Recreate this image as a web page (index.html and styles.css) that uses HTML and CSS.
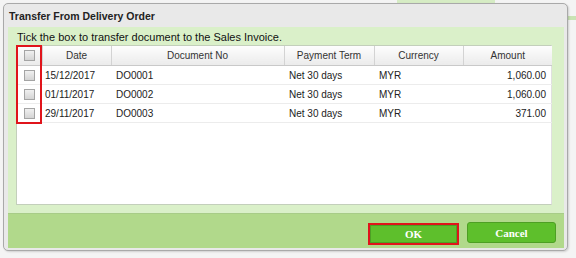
FILE: index.html
```html
<!DOCTYPE html>
<html lang="en">
<head>
  <meta charset="UTF-8">
  <title>Transfer From Delivery Order</title>
  <link rel="stylesheet" href="styles.css">
</head>
<body>

  <div class="desk">
    <div class="desk-tab"></div>
    <div class="desk-stripe"></div>

    <div class="dialog">
      <div class="dialog-title">Transfer From Delivery Order</div>

      <div class="dialog-body">
        <div class="panel">
          <p class="hint">Tick the box to transfer document to the Sales Invoice.</p>

          <div class="grid">
            <table>
              <colgroup>
                <col class="c-check">
                <col class="c-date">
                <col class="c-doc">
                <col class="c-term">
                <col class="c-cur">
                <col class="c-amt">
              </colgroup>
              <thead>
                <tr>
                  <th><span class="check"></span></th>
                  <th>Date</th>
                  <th>Document No</th>
                  <th>Payment Term</th>
                  <th>Currency</th>
                  <th>Amount</th>
                </tr>
              </thead>
              <tbody id="rows"></tbody>
            </table>
            <div class="mark-col"></div>
          </div>
        </div>

        <div class="footer">
          <span class="mark-btn"><button class="btn">OK</button></span>
          <button class="btn">Cancel</button>
        </div>
      </div>
    </div>
  </div>

  <script>
    const orders = [
      ["15/12/2017", "DO0001", "Net 30 days", "MYR", "1,060.00"],
      ["01/11/2017", "DO0002", "Net 30 days", "MYR", "1,060.00"],
      ["29/11/2017", "DO0003", "Net 30 days", "MYR", "371.00"]
    ];

    const rows = document.getElementById("rows");
    orders.forEach(o => {
      const tr = document.createElement("tr");
      tr.innerHTML = `<td><span class="check"></span></td>
        <td class="date">${o[0]}</td><td>${o[1]}</td><td>${o[2]}</td><td>${o[3]}</td>
        <td class="num">${o[4]}</td>`;
      rows.appendChild(tr);
    });
  </script>
</body>
</html>
```

FILE: styles.css
```css
body {
  margin: 0;
  font-family: 'Liberation Sans', Arial, sans-serif;
  font-size: 10px;
  color: #222;
  background: #f4f4f4;
}

.desk {
  position: relative;
  width: 576px;
  height: 258px;
  padding: 3px 0 0 3px;
  box-sizing: border-box;
  overflow: hidden;
}

.desk-tab {
  position: absolute;
  top: 0;
  left: 397px;
  width: 98px;
  height: 3px;
  background: #d6ecc4;
}

.desk-stripe {
  position: absolute;
  top: 16px;
  right: 0;
  width: 10px;
  height: 4px;
  background: #c9e3b4;
}

.dialog {
  position: relative;
  width: 565px;
  height: 248px;
  box-sizing: border-box;
  border: 1px solid #a9a9a9;
  border-radius: 5px;
  background: #e9e9e9;
  display: flex;
  flex-direction: column;
  box-shadow: 1px 1px 2px rgba(0, 0, 0, 0.15);
}

.dialog-title {
  height: 23px;
  line-height: 24px;
  padding-left: 5px;
  font-size: 10.5px;
  font-weight: bold;
  color: #222;
}

.dialog-body {
  flex-grow: 1;
  display: flex;
  flex-direction: column;
  padding: 0 3px 2px 4px;
}

.panel {
  background: #daf0c9;
  padding: 2px 12px 8px 8px;
  display: flex;
  flex-direction: column;
  height: 186px;
  box-sizing: border-box;
}

.hint {
  margin: 0;
  height: 16px;
  line-height: 16px;
  padding-left: 1px;
  font-size: 11px;
  color: #111;
}

.grid {
  position: relative;
  flex-grow: 1;
  background: #fff;
  border: 1px solid #c3cfbb;
  border-right-color: #e0e0e0;
}

table {
  width: 100%;
  border-collapse: collapse;
  table-layout: fixed;
}

.c-check { width: 25px; }
.c-date { width: 69px; }
.c-doc { width: 173px; }
.c-term { width: 90px; }
.c-cur { width: 89px; }
.c-amt { width: 89px; }

th {
  height: 19px;
  padding: 0;
  font-weight: normal;
  color: #333;
  background: linear-gradient(#fdfdfd, #ebebeb);
  border-right: 1px solid #d3d3d3;
  border-bottom: 1px solid #c9c9c9;
  text-align: center;
}

th:last-child {
  border-right: none;
}

td {
  height: 18px;
  padding: 0 0 0 5px;
  border-bottom: 1px solid #ececec;
  white-space: nowrap;
}

td.date {
  padding-left: 3px;
}

td:first-child,
th:first-child {
  padding: 0;
  text-align: center;
}

td.num {
  text-align: right;
  padding: 0 6px 0 0;
}

.check {
  display: inline-block;
  width: 9px;
  height: 9px;
  border: 1px solid #a4a4a4;
  background: linear-gradient(#f0f0f0, #d4d4d4);
  vertical-align: middle;
}

.mark-col {
  position: absolute;
  top: -1px;
  left: -1px;
  width: 22px;
  height: 75px;
  border: 2px solid #e0141b;
}

.footer {
  flex-grow: 1;
  background: #b1d98b;
  border-top: 1px solid #a8cc88;
  display: flex;
  justify-content: flex-end;
  align-items: flex-start;
  gap: 8px;
  padding: 8px 8px 0 0;
}

.mark-btn {
  display: inline-flex;
  border: 2px solid #e0141b;
  margin-top: 1px;
}

.btn {
  width: 89px;
  height: 21px;
  border: 1px solid #4d9f24;
  border-radius: 3px;
  background: #5ebf2c;
  color: #fff;
  font-family: 'Liberation Serif', serif;
  font-size: 11px;
  font-weight: bold;
  cursor: pointer;
  padding: 0;
}

.mark-btn .btn {
  width: 87px;
  height: 18px;
  border-radius: 0;
}
```
